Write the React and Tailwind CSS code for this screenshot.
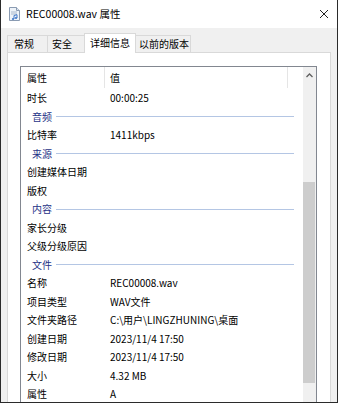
import React from "react";

const rows = [
  { type: "item", label: "时长", value: "00:00:25" },
  { type: "group", label: "音频" },
  { type: "item", label: "比特率", value: "1411kbps" },
  { type: "group", label: "来源" },
  { type: "item", label: "创建媒体日期", value: "" },
  { type: "item", label: "版权", value: "" },
  { type: "group", label: "内容" },
  { type: "item", label: "家长分级", value: "" },
  { type: "item", label: "父级分级原因", value: "" },
  { type: "group", label: "文件" },
  { type: "item", label: "名称", value: "REC00008.wav" },
  { type: "item", label: "项目类型", value: "WAV文件" },
  { type: "item", label: "文件夹路径", value: "C:\\用户\\LINGZHUNING\\桌面" },
  { type: "item", label: "创建日期", value: "2023/11/4 17:50" },
  { type: "item", label: "修改日期", value: "2023/11/4 17:50" },
  { type: "item", label: "大小", value: "4.32 MB" },
  { type: "item", label: "属性", value: "A" },
  { type: "item", label: "", value: "" },
];

function FileIcon() {
  return (
    <svg width="13" height="14" viewBox="0 0 13 14">
      <path d="M1.5 0.5h7l3 3v10h-10z" fill="#eef3f9" stroke="#8a9bb2" />
      <path d="M8.5 0.5v3h3" fill="#dce5f0" stroke="#8a9bb2" />
      <path d="M3 5h6M3 7h6" stroke="#a9b8cc" />
      <path d="M6 12V8.5l3-0.8v3.3" fill="none" stroke="#3f77c9" />
      <circle cx="5" cy="12" r="1.1" fill="#3f77c9" />
      <circle cx="8" cy="11" r="1.1" fill="#3f77c9" />
    </svg>
  );
}

function Tabs() {
  return (
    <div className="flex items-start h-[19px] relative z-10 text-black">
      <div className="mt-[2px] h-[17px] w-[41px] border-l border-t border-r border-[#d9d9d9] bg-[#f0f0f0] pl-[6px] leading-[16px]">
        常规
      </div>
      <div className="mt-[2px] h-[17px] w-[37px] border-t border-r border-[#d9d9d9] bg-[#f0f0f0] pl-[4px] leading-[16px]">
        安全
      </div>
      <div className="-ml-px h-[20px] w-[52px] border-l border-t border-r border-[#d9d9d9] bg-white pl-[5px] leading-[18px]">
        详细信息
      </div>
      <div className="mt-[2px] h-[17px] w-[55px] border-t border-r border-[#d9d9d9] bg-[#f0f0f0] pl-[3px] leading-[16px]">
        以前的版本
      </div>
    </div>
  );
}

function ListView() {
  return (
    <div className="flex h-full border-l border-t border-r border-[#828790] bg-white">
      <div className="flex-1 flex flex-col">
        <div className="flex h-[22px] shrink-0">
          <div className="w-[84px] h-[21px] border-r border-[#e5e5e5] pl-[6px] leading-[21px]">属性</div>
          <div className="w-[183px] h-[21px] border-r border-[#e5e5e5] pl-[5px] leading-[21px]">值</div>
        </div>
        {rows.map((row, i) =>
          row.type === "group" ? (
            <div key={i} className="flex items-center h-[18.5px] shrink-0 pl-[11px] pr-[9px]">
              <span className="text-[#1e3287] leading-[18px]">{row.label}</span>
              <div className="flex-1 ml-[4px] h-px bg-[#b4c6e4]" />
            </div>
          ) : (
            <div key={i} className="flex h-[18.5px] shrink-0 leading-[18.5px]">
              <div className="w-[84px] pl-[6px]">{row.label}</div>
              <div className="pl-[5px] whitespace-nowrap">{row.value}</div>
            </div>
          )
        )}
      </div>
      <div className="w-[13px] shrink-0 bg-[#f0f0f0] flex flex-col">
        <div className="h-[17px] flex items-center justify-center">
          <svg width="7" height="5" viewBox="0 0 7 5">
            <path d="M0.5 4L3.5 1L6.5 4" fill="none" stroke="#606060" strokeWidth="1.3" />
          </svg>
        </div>
        <div className="h-[98px]" />
        <div className="h-[201px] w-[12px] bg-[#cdcdcd]" />
      </div>
    </div>
  );
}

export default function App() {
  return (
    <div className="w-[338px] h-[403px] border-x border-b border-[#2b2b2b] bg-[#f0f0f0] flex flex-col overflow-hidden font-['Noto_Sans_CJK_SC',sans-serif] text-[10px] text-black">
      <div className="h-[28px] shrink-0 bg-white flex items-center pl-[7px] pr-[8px]">
        <FileIcon />
        <span className="ml-[5px] text-[10.5px] leading-[14px]">REC00008.wav 属性</span>
        <div className="flex-1" />
        <svg width="10" height="10" viewBox="0 0 10 10">
          <path d="M1 1L9 9M9 1L1 9" stroke="#222" strokeWidth="1" />
        </svg>
      </div>
      <div className="flex-1 flex flex-col px-[6px] pt-[5px] min-h-0">
        <Tabs />
        <div className="flex-1 min-h-0 border-l border-t border-r border-[#d9d9d9] bg-white pl-[12px] pr-[13px] pt-[13px]">
          <ListView />
        </div>
      </div>
    </div>
  );
}
